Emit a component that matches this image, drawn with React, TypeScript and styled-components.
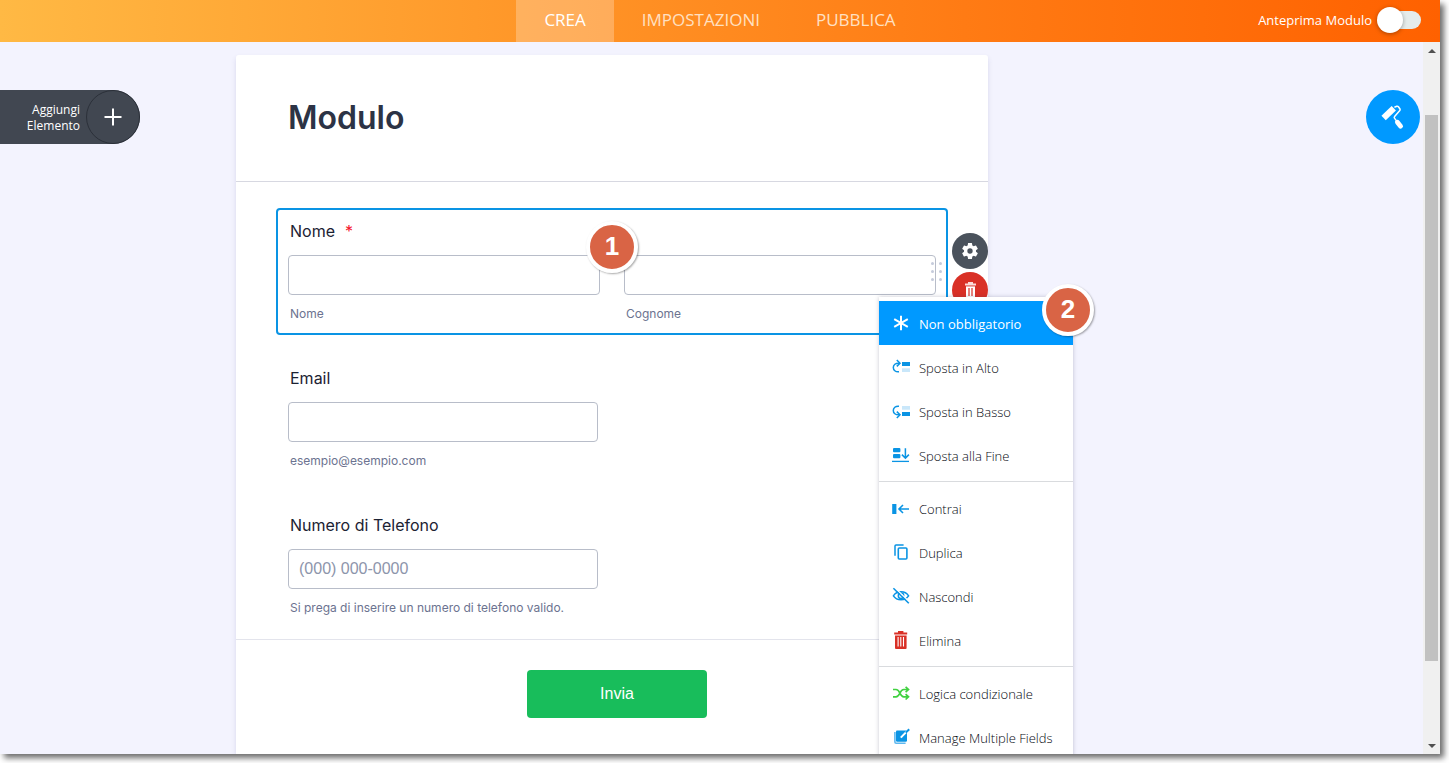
import React from "react";
import styled, { createGlobalStyle, css } from "styled-components";

const BLUE = "#0a94e4";
const UI_FONT = `"Open Sans", "Noto Sans", sans-serif`;

const GlobalStyle = createGlobalStyle`
  *, *::before, *::after { box-sizing: border-box; }
  body { margin: 0; background: #fff; font-family: ${UI_FONT}; }
  button, input { font-family: inherit; }
`;

const Page = styled.div`
  height: 100vh;
  padding: 0 9px 9px 0;
  overflow: hidden;
`;

const Shell = styled.div`
  display: flex;
  flex-direction: column;
  height: 100%;
  background: #f3f3fe;
  box-shadow: 4px 4px 6px rgba(0, 0, 0, 0.58);
`;

const TopBar = styled.header`
  display: grid;
  grid-template-columns: 1fr auto 1fr;
  flex: none;
  height: 42px;
  background: linear-gradient(to right, #ffb944, #ff9a2b 33%, #ff7b14 67%, #ff6100);
`;

const Tabs = styled.nav`
  grid-column: 2;
  display: flex;
`;

const Tab = styled.a<{ $active?: boolean }>`
  display: flex;
  align-items: center;
  padding: 0 28px 2px;
  font-size: 17px;
  line-height: 24px;
  text-decoration: none;
  color: ${(p) => (p.$active ? "#fff" : "#ffe0c2")};
  background: ${(p) => (p.$active ? "rgba(255, 255, 255, 0.25)" : "transparent")};
`;

const PreviewLabel = styled.label`
  justify-self: end;
  display: flex;
  align-items: center;
  gap: 9px;
  padding: 0 19px 2px 0;
  font-size: 13px;
  line-height: 20px;
  color: #fff;
`;

const Switch = styled.input`
  appearance: none;
  position: relative;
  width: 40px;
  height: 18px;
  margin: 0;
  border-radius: 9px;
  background: #e5eceb;

  &::before {
    content: "";
    position: absolute;
    top: -4px;
    left: -4px;
    width: 26px;
    height: 26px;
    border-radius: 50%;
    background: #fff;
    box-shadow: 0 1px 4px rgba(0, 0, 0, 0.35);
  }
`;

const Body = styled.div`
  display: flex;
  flex: 1;
  min-height: 0;
`;

const Canvas = styled.main`
  position: relative;
  display: flex;
  justify-content: center;
  flex: 1;
  min-width: 0;
  padding: 13px 199px 0 0;
  overflow: hidden;
`;

const AddElement = styled.button`
  position: absolute;
  top: 48px;
  left: 0;
  display: flex;
  align-items: center;
  justify-content: flex-end;
  gap: 6px;
  width: 140px;
  height: 54px;
  padding: 0;
  border: 0;
  border-radius: 0 27px 27px 0;
  background: #414751;
  color: #fff;
  font-size: 12px;
  line-height: 16px;
  text-align: right;
`;

const AddText = styled.span`
  padding-top: 2px;
`;

const AddCircle = styled.span`
  display: flex;
  align-items: center;
  justify-content: center;
  width: 54px;
  height: 54px;
  border: 1px solid #2b3039;
  border-radius: 50%;
`;

const PaintButton = styled.button`
  position: absolute;
  top: 48px;
  right: 3px;
  display: flex;
  align-items: center;
  justify-content: center;
  width: 54px;
  height: 54px;
  padding: 0;
  border: 0;
  border-radius: 50%;
  background: #0099ff;
`;

const Card = styled.form`
  width: 752px;
  flex: none;
  border-radius: 3px 3px 0 0;
  background: #fff;
  box-shadow: 0 3px 5px rgba(80, 80, 140, 0.16);
  font-family: Inter, sans-serif;
  color: #2c3345;
`;

const CardHeader = styled.div`
  padding: 40px 52px 41px;
  border-bottom: 1px solid #d7d8e1;
`;

const Title = styled.h1`
  margin: 0;
  font-size: 32px;
  font-weight: 600;
  line-height: 45px;
`;

const Fields = styled.div`
  display: flex;
  flex-direction: column;
  gap: 20px;
  padding: 26px 40px 10px;
`;

const Field = styled.div<{ $selected?: boolean }>`
  position: relative;
  padding: 9px 10px 11px;
  border: 2px solid ${(p) => (p.$selected ? BLUE : "transparent")};
  border-radius: 4px;
`;

const FieldLabel = styled.label`
  display: block;
  margin-bottom: 12px;
  padding-left: 2px;
  font-size: 16px;
  font-weight: 400;
  line-height: 24px;
  color: #1c2233;
`;

const Required = styled.span`
  margin-left: 10px;
  color: #f5142d;
`;

const InputRow = styled.div`
  display: grid;
  grid-template-columns: 1fr 1fr;
  gap: 24px;
`;

const InputGroup = styled.div<{ $narrow?: boolean }>`
  display: flex;
  flex-direction: column;
  gap: 11px;
  ${(p) => p.$narrow && css`max-width: 310px;`}
`;

const TextInput = styled.input`
  width: 100%;
  height: 40px;
  padding: 0 10px;
  border: 1px solid #b8bdc9;
  border-radius: 4px;
  background: #fff;
  font-family: "Liberation Sans", sans-serif;
  font-size: 16px;

  &::placeholder { color: #8d95ab; opacity: 1; }
`;

const SubLabel = styled.label`
  padding-left: 2px;
  font-size: 12px;
  line-height: 16px;
  color: #6c7390;
`;

const DragHandle = styled.span`
  position: absolute;
  top: 52px;
  right: 4px;
  display: grid;
  grid-template-columns: 3px 3px;
  gap: 5px;
`;

const Dot = styled.i`
  width: 3px;
  height: 3px;
  border-radius: 50%;
  background: #c5cbdb;
`;

const Actions = styled.div`
  position: absolute;
  top: 23px;
  left: calc(100% + 6px);
  display: flex;
  flex-direction: column;
  gap: 3px;
`;

const RoundAction = styled.button<{ $color: string }>`
  display: flex;
  align-items: center;
  justify-content: center;
  width: 36px;
  height: 36px;
  padding: 0;
  border: 0;
  border-radius: 50%;
  background: ${(p) => p.$color};
`;

const Menu = styled.div`
  position: absolute;
  z-index: 2;
  top: 87px;
  right: -127px;
  width: 194px;
  padding: 4px 0;
  background: #fff;
  box-shadow: 0 0 4px rgba(60, 60, 90, 0.28);
  font-family: ${UI_FONT};
`;

const MenuGroup = styled.div`
  & + & {
    margin-top: 4px;
    padding-top: 4px;
    border-top: 1px solid #d9dbde;
  }
`;

const MenuItem = styled.button<{ $active?: boolean }>`
  display: flex;
  align-items: center;
  gap: 8px;
  width: 100%;
  height: 44px;
  padding: 0 12px;
  border: 0;
  background: ${(p) => (p.$active ? "#0099ff" : "transparent")};
  color: ${(p) => (p.$active ? "#fff" : "#05080f")};
  font-size: 13px;
  font-weight: ${(p) => (p.$active ? 400 : 300)};
  line-height: 20px;
  white-space: nowrap;

  svg { flex: none; }
`;

const MenuText = styled.span`
  padding-top: 2px;
`;

const Marker = styled.span`
  position: absolute;
  z-index: 3;
  display: flex;
  align-items: center;
  justify-content: center;
  width: 52px;
  height: 52px;
  padding-bottom: 2px;
  border: 4px solid #fff;
  border-radius: 50%;
  background: #d96445;
  box-shadow: 1px 1px 2px rgba(0, 0, 0, 0.35);
  color: #fff;
  font-family: "Liberation Sans", sans-serif;
  font-size: 26px;
  font-weight: 700;
  line-height: 28px;
`;

const FieldMarker = styled(Marker)`
  top: 11px;
  left: calc(50% - 26px);
`;

const MenuMarker = styled(Marker)`
  top: -13px;
  right: -21px;
`;

const CardFooter = styled.div`
  display: flex;
  justify-content: center;
  padding: 30px 0 40px 10px;
  border-top: 1px solid #e3e4ec;
`;

const Submit = styled.button`
  width: 180px;
  height: 48px;
  border: 0;
  border-radius: 4px;
  background: #18bd5b;
  color: #fff;
  font-family: "Liberation Sans", sans-serif;
  font-size: 16px;
`;

const ScrollBar = styled.div`
  display: flex;
  flex-direction: column;
  align-items: center;
  width: 17px;
  flex: none;
  background: #f0f0f0;
`;

const ScrollArrow = styled.span<{ $down?: boolean }>`
  display: flex;
  align-items: center;
  justify-content: center;
  height: 17px;
  flex: none;

  &::before {
    content: "";
    border: 4px solid transparent;
    ${(p) =>
      p.$down
        ? css`border-top-color: #505050; border-bottom: 0;`
        : css`border-bottom-color: #505050; border-top: 0;`}
  }
`;

const ScrollGap = styled.span<{ $grow: number }>`
  flex: ${(p) => p.$grow} 0 0;
`;

const ScrollThumb = styled(ScrollGap)`
  width: 13px;
  background: #c1c1c1;
`;

const Icon = ({ size = 20, children }: { size?: number; children: React.ReactNode }) => (
  <svg width={size} height={size} viewBox={`0 0 ${size} ${size}`} fill="none" aria-hidden="true">
    {children}
  </svg>
);

const MoveShape = () => (
  <>
    <path d="M8 14.8C4.4 15.2 2.3 13 2.3 10.6C2.3 7.8 4.3 6 8.4 6.2" stroke={BLUE} strokeWidth="1.5" />
    <path d="M5.8 3L9 6.2L5.8 9.4" stroke={BLUE} strokeWidth="1.5" />
    <rect x="11" y="5" width="8" height="4" fill={BLUE} />
    <rect x="11" y="11.3" width="8" height="3.7" fill="#c9e7fa" />
  </>
);

const AsteriskIcon = () => (
  <Icon>
    <path d="M10 2.8V17.2M3.2 6.2L16.8 13.8M16.8 6.2L3.2 13.8" stroke="#fff" strokeWidth="2" />
  </Icon>
);

const MoveUpIcon = () => (
  <Icon>
    <MoveShape />
  </Icon>
);

const MoveDownIcon = () => (
  <Icon>
    <g transform="matrix(1 0 0 -1 0 20)">
      <MoveShape />
    </g>
  </Icon>
);

const MoveEndIcon = () => (
  <Icon>
    <rect x="2" y="3" width="7.4" height="4.2" rx="1" fill={BLUE} />
    <rect x="2" y="9" width="7.4" height="4.2" rx="1" fill={BLUE} />
    <path d="M1 16.4H18" stroke={BLUE} strokeWidth="1.3" />
    <path d="M14.4 3.3V13M10.9 9.6L14.4 13.1L17.9 9.6" stroke={BLUE} strokeWidth="1.5" />
  </Icon>
);

const ShrinkIcon = () => (
  <Icon>
    <rect x="1.2" y="6" width="4.2" height="10" fill={BLUE} />
    <path d="M18 11H8.2M12 7L8 11L12 15" stroke={BLUE} strokeWidth="1.6" />
  </Icon>
);

const DuplicateIcon = () => (
  <Icon>
    <path d="M4 13.8V4Q4 3 5 3H12.6" stroke={BLUE} strokeWidth="1.5" />
    <rect x="7.3" y="6" width="8.6" height="11" rx="1" stroke={BLUE} strokeWidth="1.6" />
  </Icon>
);

const HideIcon = () => (
  <Icon>
    <path d="M2.4 9.8C5.8 4.4 14.2 4.4 17.6 9.8C14.2 15 5.8 15 2.4 9.8Z" stroke={BLUE} strokeWidth="1.5" />
    <circle cx="10" cy="9.8" r="2.7" stroke={BLUE} strokeWidth="1.5" />
    <path d="M3.8 1.8L18.6 16" stroke="#fff" strokeWidth="1.2" />
    <path d="M2.4 2.2L17.8 17.2" stroke={BLUE} strokeWidth="1.6" />
  </Icon>
);

const DeleteIcon = () => (
  <Icon>
    <path d="M7 2.6V1H12.4V2.6H16.2V4.4H3.2V2.6Z" fill="#d93026" />
    <path d="M4 5.4H15.6V18Q15.6 19 14.6 19H5Q4 19 4 18Z" fill="#d93026" />
    <path d="M7.1 7V16.6M9.8 7V16.6M12.5 7V16.6" stroke="#fff" strokeWidth="1.1" />
  </Icon>
);

const ShuffleIcon = () => (
  <Icon>
    <path
      d="M2 6.5H5C9.4 6.5 8.4 13.8 12.8 13.8H17.4M2 13.8H5C9.4 13.8 8.4 6.5 12.8 6.5H17.4M14.6 3.8L17.5 6.5L14.6 9.2M14.6 11.1L17.5 13.8L14.6 16.5"
      stroke="#41d141"
      strokeWidth="1.7"
    />
  </Icon>
);

const EditFieldsIcon = () => (
  <Icon>
    <path d="M3.9 5V15Q3.9 16.2 5.1 16.2H14.6" stroke="#5eb8ef" strokeWidth="1.6" />
    <path d="M6 3.4H16V13.6Q16 14.8 14.8 14.8H6.2Q5 14.8 5 13.6V4.4Q5 3.4 6 3.4Z" fill={BLUE} />
    <path d="M17.6 2.6L9.8 10.6" stroke="#fff" strokeWidth="2" />
    <path d="M18.2 2.2L14.8 5.6" stroke={BLUE} strokeWidth="2" />
  </Icon>
);

const PlusIcon = () => (
  <Icon>
    <path d="M10 1.5V18.5M1.5 10H18.5" stroke="#fff" strokeWidth="2" />
  </Icon>
);

const PaintRollerIcon = () => (
  <Icon size={26}>
    <path d="M3.6 14L13.8 4.2" stroke="#fff" strokeWidth="6.2" />
    <path d="M14.4 3.2L16.8 2.2Q17.8 2 18.4 2.8L20 5Q20.4 5.8 19.8 6.4L14.6 12.4Q13.8 13.4 14.6 14.4L17 17.4" stroke="#fff" strokeWidth="1.5" />
    <path d="M17.4 18.2L20.6 22.2" stroke="#fff" strokeWidth="4.8" strokeLinecap="round" />
  </Icon>
);

const GearIcon = () => (
  <svg width="20" height="20" viewBox="0 0 24 24" fill="#fff" aria-hidden="true">
    <path d="M19.14 12.94c.04-.3.06-.61.06-.94 0-.32-.02-.64-.07-.94l2.03-1.58a.49.49 0 0 0 .12-.61l-1.92-3.32a.488.488 0 0 0-.59-.22l-2.39.96c-.5-.38-1.03-.7-1.62-.94l-.36-2.54a.484.484 0 0 0-.48-.41h-3.84c-.24 0-.43.17-.47.41l-.36 2.54c-.59.24-1.13.57-1.62.94l-2.39-.96c-.22-.08-.47 0-.59.22L2.74 8.87c-.12.21-.08.47.12.61l2.03 1.58c-.05.3-.09.63-.09.94s.02.64.07.94l-2.03 1.58a.49.49 0 0 0-.12.61l1.92 3.32c.12.22.37.29.59.22l2.39-.96c.5.38 1.03.7 1.62.94l.36 2.54c.05.24.24.41.48.41h3.84c.24 0 .44-.17.47-.41l.36-2.54c.59-.24 1.13-.56 1.62-.94l2.39.96c.22.08.47 0 .59-.22l1.92-3.32c.12-.22.07-.47-.12-.61l-2.01-1.58zM12 15.2A3.2 3.2 0 1 1 12 8.8a3.2 3.2 0 0 1 0 6.4z" />
  </svg>
);

const TrashIcon = () => (
  <Icon>
    <path d="M8 3.4V2H13V3.4H16V5.6H5V3.4Z" fill="#fbdcda" />
    <path d="M6 6.4H15V17.4H6Z" fill="#fff" />
    <path d="M9 8V16M12 8V16" stroke="#d93026" strokeWidth="1.2" />
  </Icon>
);

const menu = [
  [
    { label: "Non obbligatorio", icon: <AsteriskIcon />, active: true },
    { label: "Sposta in Alto", icon: <MoveUpIcon /> },
    { label: "Sposta in Basso", icon: <MoveDownIcon /> },
    { label: "Sposta alla Fine", icon: <MoveEndIcon /> },
  ],
  [
    { label: "Contrai", icon: <ShrinkIcon /> },
    { label: "Duplica", icon: <DuplicateIcon /> },
    { label: "Nascondi", icon: <HideIcon /> },
    { label: "Elimina", icon: <DeleteIcon /> },
  ],
  [
    { label: "Logica condizionale", icon: <ShuffleIcon /> },
    { label: "Manage Multiple Fields", icon: <EditFieldsIcon /> },
  ],
] as { label: string; icon: React.ReactNode; active?: boolean }[][];

const FieldMenu = () => (
  <Menu>
    {menu.map((group, i) => (
      <MenuGroup key={i}>
        {group.map((item) => (
          <MenuItem key={item.label} type="button" $active={item.active}>
            {item.icon}
            <MenuText>{item.label}</MenuText>
          </MenuItem>
        ))}
      </MenuGroup>
    ))}
    <MenuMarker>2</MenuMarker>
  </Menu>
);

export default function App() {
  return (
    <Page>
      <GlobalStyle />
      <Shell>
        <TopBar>
          <Tabs>
            <Tab href="#crea" $active>CREA</Tab>
            <Tab href="#impostazioni">IMPOSTAZIONI</Tab>
            <Tab href="#pubblica">PUBBLICA</Tab>
          </Tabs>
          <PreviewLabel>
            Anteprima Modulo
            <Switch type="checkbox" role="switch" />
          </PreviewLabel>
        </TopBar>
        <Body>
          <Canvas>
            <Card>
              <CardHeader>
                <Title>Modulo</Title>
              </CardHeader>
              <Fields>
                <Field $selected>
                  <FieldLabel htmlFor="first">
                    Nome<Required>*</Required>
                  </FieldLabel>
                  <InputRow>
                    <InputGroup>
                      <TextInput id="first" type="text" />
                      <SubLabel htmlFor="first">Nome</SubLabel>
                    </InputGroup>
                    <InputGroup>
                      <TextInput id="last" type="text" />
                      <SubLabel htmlFor="last">Cognome</SubLabel>
                    </InputGroup>
                  </InputRow>
                  <DragHandle>
                    <Dot /><Dot /><Dot /><Dot /><Dot /><Dot />
                  </DragHandle>
                  <Actions>
                    <RoundAction type="button" aria-label="Proprietà" $color="#4a525c">
                      <GearIcon />
                    </RoundAction>
                    <RoundAction type="button" aria-label="Elimina" $color="#d93026">
                      <TrashIcon />
                    </RoundAction>
                  </Actions>
                  <FieldMarker>1</FieldMarker>
                  <FieldMenu />
                </Field>
                <Field>
                  <FieldLabel htmlFor="email">Email</FieldLabel>
                  <InputGroup $narrow>
                    <TextInput id="email" type="email" />
                    <SubLabel htmlFor="email">esempio@esempio.com</SubLabel>
                  </InputGroup>
                </Field>
                <Field>
                  <FieldLabel htmlFor="phone">Numero di Telefono</FieldLabel>
                  <InputGroup $narrow>
                    <TextInput id="phone" type="tel" placeholder="(000) 000-0000" />
                    <SubLabel htmlFor="phone">Si prega di inserire un numero di telefono valido.</SubLabel>
                  </InputGroup>
                </Field>
              </Fields>
              <CardFooter>
                <Submit type="button">Invia</Submit>
              </CardFooter>
            </Card>
            <AddElement type="button">
              <AddText>
                Aggiungi
                <br />
                Elemento
              </AddText>
              <AddCircle>
                <PlusIcon />
              </AddCircle>
            </AddElement>
            <PaintButton type="button" aria-label="Stile">
              <PaintRollerIcon />
            </PaintButton>
          </Canvas>
          <ScrollBar>
            <ScrollArrow />
            <ScrollGap $grow={56} />
            <ScrollThumb $grow={546} />
            <ScrollGap $grow={76} />
            <ScrollArrow $down />
          </ScrollBar>
        </Body>
      </Shell>
    </Page>
  );
}
